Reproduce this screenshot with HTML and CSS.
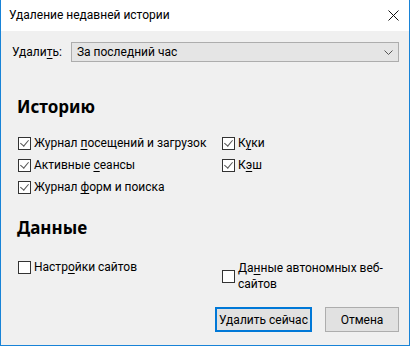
FILE: index.html
```html
<!DOCTYPE html>
<html lang="ru">
<head>
  <meta charset="UTF-8">
  <title>Удаление недавней истории</title>
  <link rel="stylesheet" href="styles.css">
</head>
<body>
  <div class="window">
    <div class="titlebar">
      <span class="title">Удаление недавней истории</span>
      <svg class="close" width="11" height="11" viewBox="0 0 11 11">
        <path d="M0.5 0.5 L10.5 10.5 M10.5 0.5 L0.5 10.5" stroke="#111" stroke-width="1" fill="none"/>
      </svg>
    </div>
    <div class="content">
      <div class="range-row">
        <span class="range-label">Удали<u>т</u>ь:</span>
        <div class="select">
          <span>За последний час</span>
          <svg class="chevron" width="9" height="5" viewBox="0 0 9 5">
            <path d="M0.5 0.5 L4.5 4.5 L8.5 0.5" stroke="#555" stroke-width="1" fill="none"/>
          </svg>
        </div>
      </div>

      <h2>Историю</h2>
      <div class="options">
        <div class="option"><span class="box checked"></span><span>Журнал <u>п</u>осещений и загрузок</span></div>
        <div class="option"><span class="box checked"></span><span>К<u>у</u>ки</span></div>
        <div class="option"><span class="box checked"></span><span>Активные <u>с</u>еансы</span></div>
        <div class="option"><span class="box checked"></span><span>К<u>э</u>ш</span></div>
        <div class="option"><span class="box checked"></span><span>Журнал <u>ф</u>орм и поиска</span></div>
      </div>

      <h2 class="second">Данные</h2>
      <div class="options data">
        <div class="option"><span class="box"></span><span>Настр<u>о</u>йки сайтов</span></div>
        <div class="option wrap"><span class="box"></span><span class="wrap-text">Да<u>н</u>ные автономных веб-сайтов</span></div>
      </div>

      <div class="buttons">
        <button class="btn default">Удалить сейчас</button>
        <button class="btn">Отмена</button>
      </div>
    </div>
  </div>
</body>
</html>
```

FILE: styles.css
```css
* {
  box-sizing: border-box;
}
html, body {
  margin: 0;
  padding: 0;
}
body {
  font-family: Roboto, "Noto Sans", sans-serif;
  font-size: 12px;
  color: #000;
  background: #fff;
}
u {
  text-decoration: underline;
  text-underline-offset: 2px;
}
.window {
  width: 410px;
  height: 346px;
  border: 1px solid #1883d7;
  border-top: none;
  display: flex;
  flex-direction: column;
  background: #f0f0f0;
}
.titlebar {
  height: 31px;
  background: #fff;
  display: flex;
  align-items: center;
  justify-content: space-between;
  padding: 0 10px 1px 8px;
}
.title {
  font-size: 12px;
}
.close {
  display: block;
}
.content {
  flex: 1;
  display: flex;
  flex-direction: column;
  padding: 11px 10px 13px 11px;
}
.range-row {
  display: flex;
  align-items: center;
  gap: 9px;
}
.select {
  flex: 1;
  height: 20px;
  background: #e5e5e5;
  border: 1px solid #adadad;
  display: flex;
  align-items: center;
  justify-content: space-between;
  padding: 0 5px 0 5px;
}
.chevron {
  display: block;
}
h2 {
  font-family: "Noto Sans", sans-serif;
  font-size: 17px;
  font-weight: bold;
  margin: 34px 0 0 5px;
  line-height: 22px;
}
h2.second {
  margin-top: 22px;
}
.options {
  display: grid;
  grid-template-columns: 204px 1fr;
  margin: 17px 0 0 6px;
  row-gap: 6px;
}
.options.data {
  margin-top: 20px;
}
.option {
  display: flex;
  align-items: center;
  gap: 3px;
  height: 16px;
}
.option.wrap {
  height: auto;
  margin-top: 1px;
  align-items: center;
}
.wrap-text {
  width: 150px;
  line-height: 16px;
}
.box {
  width: 13px;
  height: 13px;
  flex: none;
  border: 1px solid #333;
  background: #fff;
  position: relative;
}
.box.checked::after {
  content: "";
  position: absolute;
  left: 3px;
  top: 0px;
  width: 4px;
  height: 7px;
  border-right: 1px solid #555;
  border-bottom: 1px solid #555;
  transform: rotate(40deg);
}
.buttons {
  margin-top: auto;
  display: flex;
  justify-content: flex-end;
  gap: 13px;
}
.btn {
  font-family: inherit;
  font-size: 12px;
  height: 25px;
  background: #e1e1e1;
  border: 1px solid #adadad;
  padding: 0;
  color: #000;
}
.btn.default {
  width: 97px;
  border: 2px solid #0078d7;
}
.btn:not(.default) {
  width: 74px;
}
```
